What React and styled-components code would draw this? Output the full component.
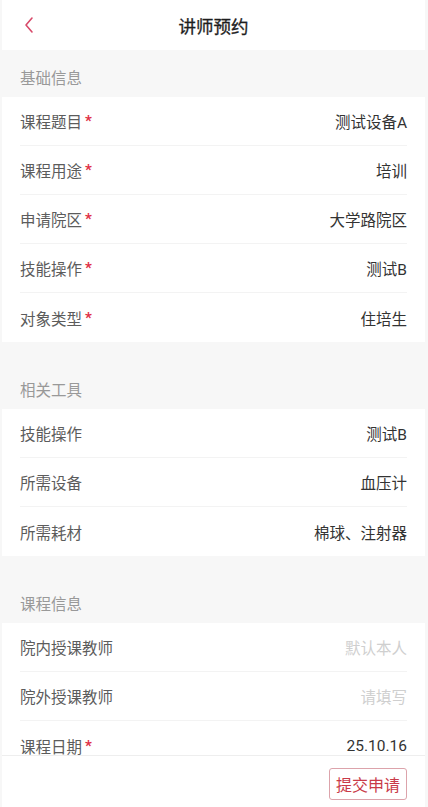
import React from 'react'
import styled, {createGlobalStyle} from 'styled-components'

const GlobalStyle = createGlobalStyle`
    html, body {
        margin: 0;
        padding: 0;
        background: #f7f7f7;
    }
    body {
        font-family: Roboto, "Noto Sans CJK SC", sans-serif;
    }
    * {
        box-sizing: border-box;
    }
`

const sections = [
    {
        title: '基础信息',
        rows: [
            {label: '课程题目', value: '测试设备A', required: true},
            {label: '课程用途', value: '培训', required: true},
            {label: '申请院区', value: '大学路院区', required: true},
            {label: '技能操作', value: '测试B', required: true},
            {label: '对象类型', value: '住培生', required: true},
        ],
    },
    {
        title: '相关工具',
        rows: [
            {label: '技能操作', value: '测试B'},
            {label: '所需设备', value: '血压计'},
            {label: '所需耗材', value: '棉球、注射器'},
        ],
    },
    {
        title: '课程信息',
        rows: [
            {label: '院内授课教师', value: '默认本人', placeholder: true},
            {label: '院外授课教师', value: '请填写', placeholder: true},
            {label: '课程日期', value: '25.10.16', required: true},
        ],
    },
]

const App = () => {
    return (
        <Page>
            <GlobalStyle />
            <Header>
                <BackButton aria-label="返回">
                    <svg width="12" height="18" viewBox="0 0 12 18" fill="none">
                        <path d="M9 2 L3 9 L9 16" stroke="#d84a6a" strokeWidth="1.6" strokeLinecap="round" strokeLinejoin="round" />
                    </svg>
                </BackButton>
                <Title>讲师预约</Title>
            </Header>
            <Content>
                {sections.map((section, i) => (
                    <Section key={section.title} first={i === 0}>
                        <SectionTitle>{section.title}</SectionTitle>
                        <Card>
                            {section.rows.map(row => (
                                <Row key={row.label}>
                                    <Label>
                                        {row.label}
                                        {row.required ? <Star>*</Star> : ''}
                                    </Label>
                                    <Value placeholder={row.placeholder}>{row.value}</Value>
                                </Row>
                            ))}
                        </Card>
                    </Section>
                ))}
            </Content>
            <Footer>
                <SubmitButton>提交申请</SubmitButton>
            </Footer>
        </Page>
    )
}

const Page = styled.div`
    display: flex;
    flex-direction: column;
    height: 100vh;
    margin: 0 3px 0 2px;
    overflow: hidden;
`

const Header = styled.div`
    position: relative;
    flex: none;
    display: flex;
    align-items: center;
    justify-content: center;
    height: 50px;
    background: #fff;
`

const BackButton = styled.button`
    position: absolute;
    left: 21px;
    top: 16px;
    display: flex;
    padding: 0;
    border: none;
    background: none;
`

const Title = styled.div`
    font-size: 17.5px;
    font-weight: 400;
    color: #1e1e1e;
    -webkit-text-stroke: 0.3px #1e1e1e;
`

const Content = styled.div`
    flex: 1;
    overflow-y: auto;
    scrollbar-width: none;
`

const Section = styled.div`
    margin-top: ${props => (props.first ? '0' : '20px')};
`

const SectionTitle = styled.div`
    height: 47px;
    padding: 0 18px;
    display: flex;
    align-items: center;
    padding-top: 7px;
    font-size: 15.5px;
    color: #999;
`

const Card = styled.div`
    background: #fff;
    padding: 0 18px;
`

const Row = styled.div`
    display: flex;
    align-items: center;
    justify-content: space-between;
    height: 49px;
    border-bottom: 1px solid #f3f3f3;
    &:last-child {
        border-bottom: none;
    }
`

const Label = styled.div`
    display: flex;
    align-items: center;
    font-size: 15.5px;
    color: #5c5c5c;
`

const Star = styled.span`
    margin-left: 3px;
    color: #e02f45;
    font-size: 15px;
    font-weight: 700;
`

const Value = styled.div`
    font-size: 15.5px;
    color: ${props => (props.placeholder ? '#cfcfcf' : '#333')};
`

const Footer = styled.div`
    flex: none;
    display: flex;
    justify-content: flex-end;
    align-items: flex-start;
    height: 52px;
    padding: 12px 18px 0;
    background: #fff;
    border-top: 1px solid #eee;
`

const SubmitButton = styled.button`
    height: 32px;
    padding: 0 6px;
    border: 1px solid #dca3ab;
    border-radius: 3px;
    background: #fff;
    color: #c93a48;
    font-family: Roboto, "Noto Sans CJK SC", sans-serif;
    font-size: 16px;
`

export default App
